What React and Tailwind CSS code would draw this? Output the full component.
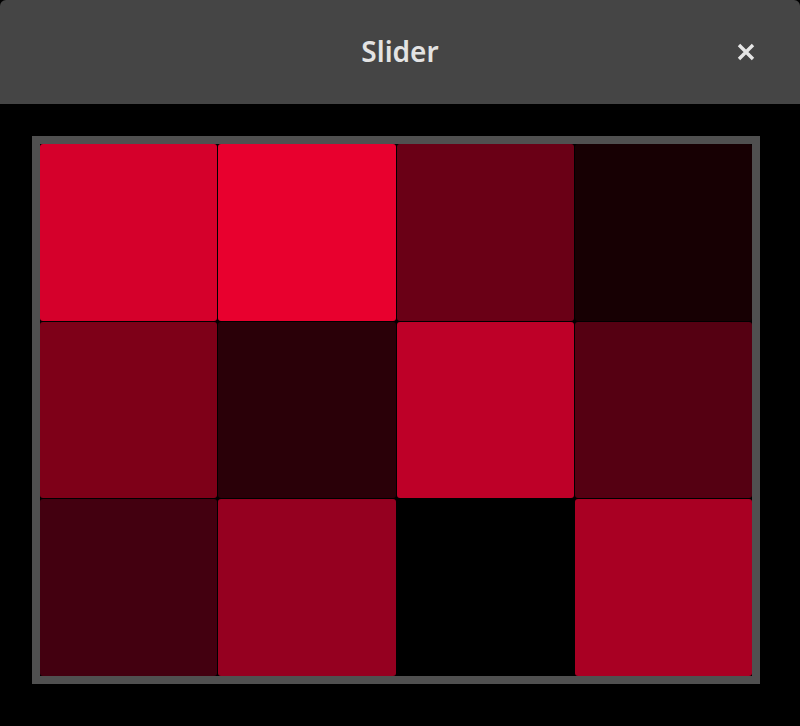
import React from 'react';

const tiles = [
  '#d5002b', '#e8002e', '#6a0016', '#170003',
  '#7e0018', '#2a0008', '#be0028', '#550012',
  '#430010', '#950020', '#000000', '#a90023',
];

function TitleBar() {
  return (
    <div className="relative h-[104px] bg-[#454545] rounded-t-[6px] flex items-center justify-center">
      <span className="text-[28px] font-semibold text-[#e3e3e3] leading-none -mt-[2px]" style={{ fontFamily: '"Noto Sans", "Open Sans", sans-serif' }}>
        Slider
      </span>
      <button className="absolute right-[44px] top-[42px] w-[20px] h-[20px] flex items-center justify-center">
        <svg width="18" height="18" viewBox="0 0 18 18">
          <path d="M2 2 L16 16 M16 2 L2 16" stroke="#e6e6e6" strokeWidth="3.4" strokeLinecap="butt" />
        </svg>
      </button>
    </div>
  );
}

export default function App() {
  return (
    <div className="w-[800px] h-[726px] bg-black overflow-hidden">
      <TitleBar />
      <div className="pt-[32px] pl-[32px]">
        <div className="w-[728px] h-[548px] border-[8px] border-[#505050] bg-black">
          <div className="grid grid-cols-4 grid-rows-3 gap-px w-full h-full">
            {tiles.map((c, i) => (
              <div key={i} className="rounded-[3px]" style={{ backgroundColor: c }} />
            ))}
          </div>
        </div>
      </div>
    </div>
  );
}
